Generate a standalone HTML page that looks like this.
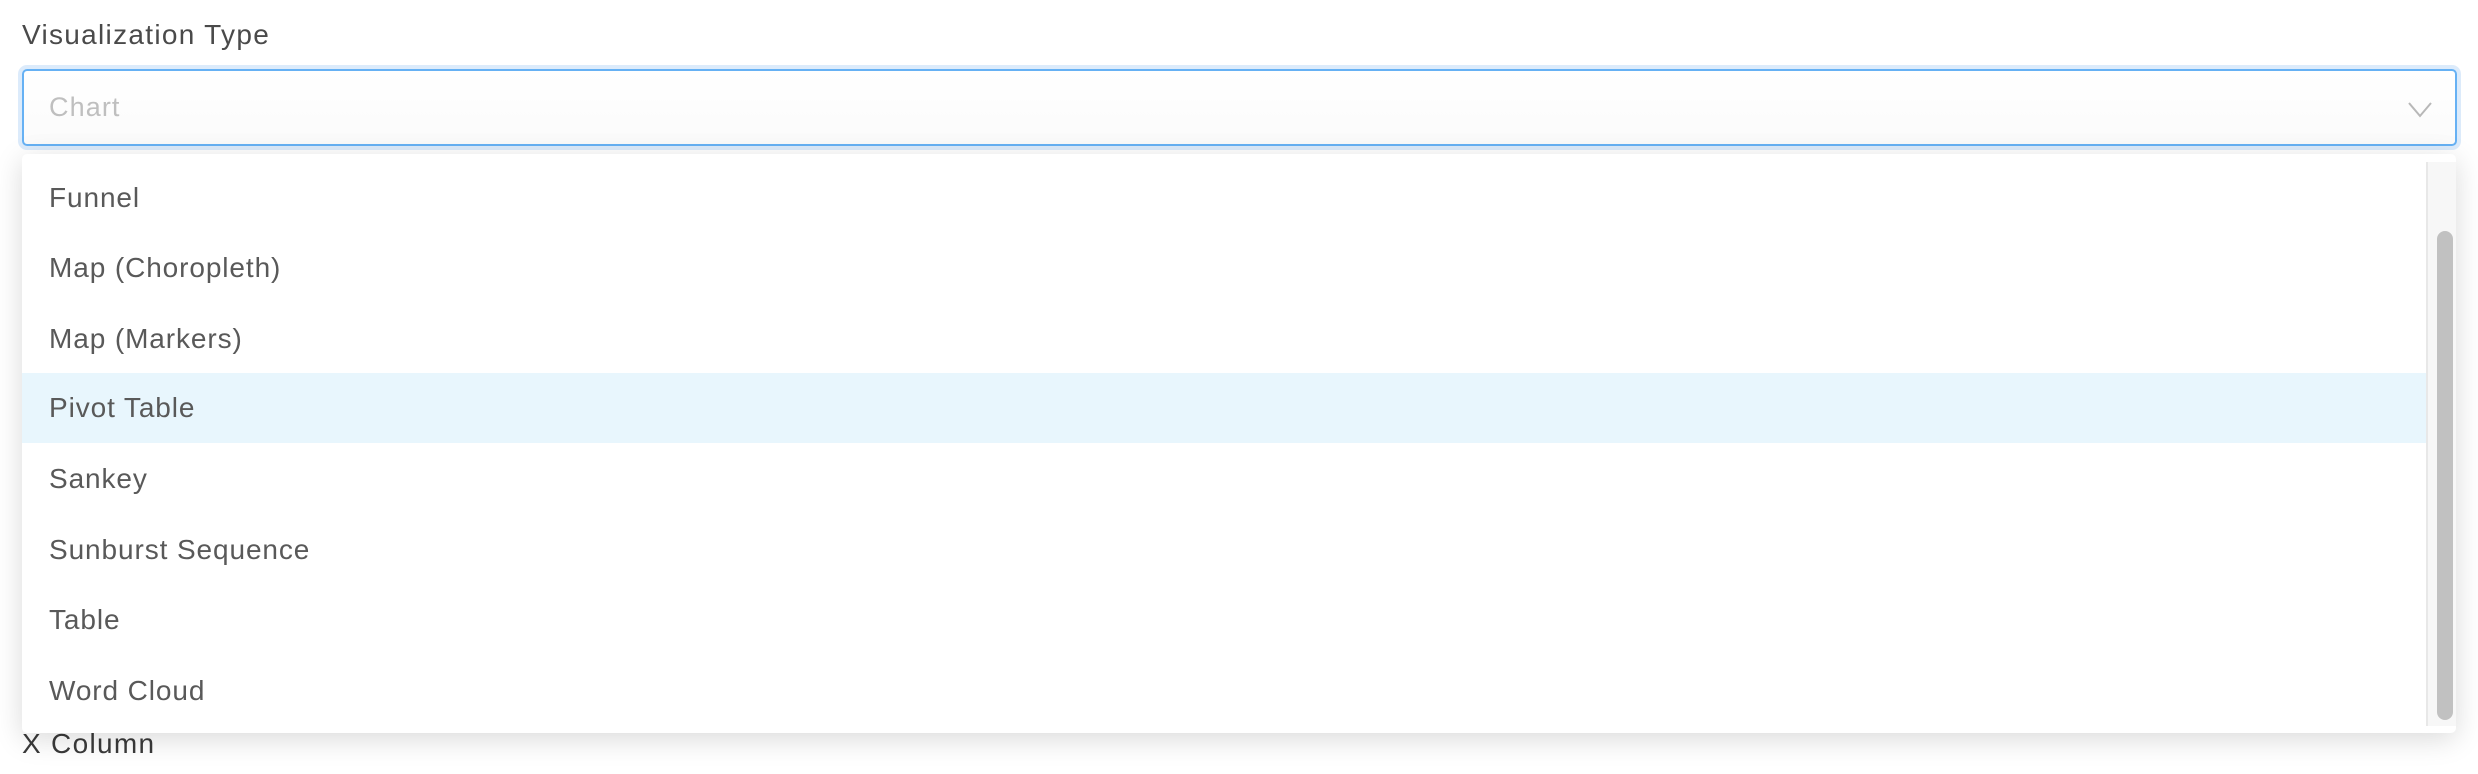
<!DOCTYPE html>
<html><head><meta charset="utf-8"><style>
html,body{margin:0;padding:0;width:2478px;height:774px;background:#fff;overflow:hidden;font-family:"Liberation Sans",sans-serif;position:relative}
.lbl{position:absolute;left:22px;font-size:28px;letter-spacing:1.3px;color:#4a4a4a;}
.inp{position:absolute;left:22px;top:69px;width:2431px;height:73px;border:2px solid #66b1f4;border-radius:5px;box-shadow:0 0 0 4px #dcebfb;background:linear-gradient(#fff,#fbfbfb);}
.inp span{position:absolute;left:25px;top:21px;font-size:27px;letter-spacing:1.1px;color:#bfbfbf;}
.dd{position:absolute;left:22px;top:154px;width:2434px;height:579px;background:#fff;border-radius:5px;box-shadow:0 6px 28px rgba(0,0,0,0.15);}
.it{position:absolute;left:0;width:2404px;height:70px;font-size:28px;letter-spacing:0.9px;color:#595959;line-height:70px;padding-left:27px;box-sizing:border-box}
.hl{background:#e8f6fd}
.trk{position:absolute;left:2404px;top:8px;width:30px;height:564px;background:#f7f7f7;border-left:2px solid #e8e8e8;box-sizing:border-box}
.th{position:absolute;left:9px;top:69px;width:16px;height:489px;background:#c1c1c1;border-radius:8px}
</style></head><body>
<div class="lbl" style="top:19px">Visualization Type</div>
<div class="lbl" style="top:728px;color:#3a3a3a">X Column</div>
<div class="inp"><span>Chart</span>
<svg style="position:absolute;left:2383px;top:29px" width="26" height="20" viewBox="0 0 26 20"><path d="M2 3 L13 16 L24 3" fill="none" stroke="#b8b8b8" stroke-width="2"/></svg></div>
<div class="dd">
<div class="it" style="top:9px">Funnel</div>
<div class="it" style="top:79px">Map (Choropleth)</div>
<div class="it" style="top:150px">Map (Markers)</div>
<div class="it hl" style="top:219px">Pivot Table</div>
<div class="it" style="top:290px">Sankey</div>
<div class="it" style="top:361px">Sunburst Sequence</div>
<div class="it" style="top:431px">Table</div>
<div class="it" style="top:502px">Word Cloud</div>
<div class="trk"><div class="th"></div></div>
</div>
</body></html>
